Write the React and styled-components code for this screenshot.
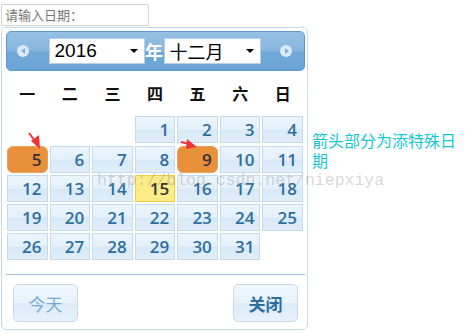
import styled, {createGlobalStyle} from 'styled-components';

const GlobalStyle = createGlobalStyle`
  html, body {
    margin: 0;
    background: #fff;
    font-family: "Liberation Sans", "Noto Sans CJK SC", sans-serif;
  }
`

const Page = styled.div`
  position: relative;
  display: flex;
  align-items: flex-start;
  padding: 4px 0 0 1px;
  width: 466px;
  height: 335px;
  box-sizing: border-box;
  overflow: hidden;
`

const LeftCol = styled.div`
  display: flex;
  flex-direction: column;
  gap: 1px;
`

const DateInput = styled.div`
  width: 148px;
  height: 22px;
  box-sizing: border-box;
  border: 1px solid #d3d3d3;
  border-radius: 2px;
  padding: 1px 3px;
  font-size: 13px;
  line-height: 18px;
  color: #777;
  font-family: "Noto Sans CJK SC", sans-serif;
`

const Picker = styled.div`
  width: 307px;
  box-sizing: border-box;
  border: 1px solid #c5dbec;
  border-radius: 5px;
  padding: 3px 2px 7px 4px;
  background: #fff;
`

const Header = styled.div`
  height: 40px;
  box-sizing: border-box;
  border: 1px solid #5a9bd2;
  border-radius: 5px;
  background: linear-gradient(#96c0e4 0%, #88b6de 48%, #72a9d8 52%, #6aa4d5 100%);
  display: flex;
  align-items: center;
  justify-content: space-between;
  padding: 0 12px 0 10px;
`

const NavButton = styled.div`
  width: 12px;
  height: 12px;
  border-radius: 50%;
  background: #dce9f6;
  display: flex;
  align-items: center;
  justify-content: center;
  &::after {
    content: '';
    width: 0;
    height: 0;
    border-top: 3px solid transparent;
    border-bottom: 3px solid transparent;
    ${p => p.$dir === 'prev'
      ? 'border-right: 4px solid #7fb0dc; margin-right: 1px;'
      : 'border-left: 4px solid #7fb0dc; margin-left: 1px;'}
  }
`

const Title = styled.div`
  display: flex;
  align-items: center;
`

const SelectBox = styled.div`
  width: ${p => p.$w}px;
  height: 26px;
  box-sizing: border-box;
  background: #fff;
  border: 1px solid #b9cfe3;
  display: flex;
  align-items: center;
  justify-content: space-between;
  padding: 0 6px 0 5px;
  font-size: ${p => p.$size}px;
  color: #000;
  font-family: "Liberation Sans", "Noto Sans CJK SC", sans-serif;
  &::after {
    content: '';
    border-left: 4px solid transparent;
    border-right: 4px solid transparent;
    border-top: 4px solid #000;
  }
`

const YearLabel = styled.span`
  width: 19px;
  text-align: center;
  color: #fff;
  font-weight: bold;
  font-size: 18px;
  font-family: "Noto Sans CJK SC", sans-serif;
`

const Grid = styled.div`
  display: grid;
  grid-template-columns: repeat(7, 1fr);
  grid-template-rows: 43px;
  grid-auto-rows: 27px;
  column-gap: 2px;
  row-gap: 2.25px;
  width: 296px;
  padding-left: 1px;
`

const WeekHead = styled.div`
  display: flex;
  align-items: center;
  justify-content: center;
  font-weight: bold;
  font-size: 16px;
  color: #111;
  font-family: "Noto Sans CJK SC", sans-serif;
`

const variants = {
  normal: `
    background: linear-gradient(#ecf5fd 0%, #e4f0fb 48%, #d8e8f7 52%, #e0eefa 100%);
    border: 1px solid #c5dbec;
    color: #2e6e9e;
  `,
  today: `
    background: #fbec88;
    border: 1px solid #f2cf3a;
    color: #363636;
  `,
  special: `
    background: #e8903a;
    border: 1px solid #e8a060;
    border-radius: 6px;
    color: #333;
  `,
  empty: `
    background: transparent;
    border: 1px solid transparent;
  `,
}

const Day = styled.div`
  box-sizing: border-box;
  display: flex;
  align-items: center;
  justify-content: flex-end;
  padding-right: 5px;
  font-family: "Open Sans", "Liberation Sans", sans-serif;
  font-weight: 600;
  font-size: 17px;
  ${p => variants[p.$variant]}
`

const ButtonPane = styled.div`
  margin-top: 14px;
  border-top: 1px solid #a6c9e2;
  padding: 9px 7px 0 7px;
  display: flex;
  justify-content: space-between;
`

const PaneButton = styled.div`
  width: 65px;
  height: 38px;
  box-sizing: border-box;
  border: 1px solid #c5dbec;
  border-radius: 5px;
  background: linear-gradient(#f0f7fd 0%, #e8f2fc 48%, #dcebf9 52%, #e6f1fb 100%);
  display: flex;
  align-items: center;
  justify-content: center;
  font-size: 17px;
  font-family: "Noto Sans CJK SC", sans-serif;
  color: ${p => p.$primary ? '#2e6e9e' : '#7aa9d0'};
  font-weight: ${p => p.$primary ? 'bold' : 'normal'};
`

const Note = styled.div`
  width: 150px;
  margin: 126px 0 0 4px;
  font-size: 16px;
  line-height: 20px;
  color: #14c8d2;
  font-family: "Noto Sans CJK SC", sans-serif;
`

const Watermark = styled.div`
  position: absolute;
  left: 97px;
  top: 171px;
  font-family: "Liberation Mono", monospace;
  font-size: 16.5px;
  color: rgba(140, 140, 140, 0.35);
  white-space: nowrap;
  pointer-events: none;
`

const Marks = styled.svg`
  position: absolute;
  left: 0;
  top: 0;
  pointer-events: none;
`

const weekDays = ['一', '二', '三', '四', '五', '六', '日']
const special = [5, 9]
const today = 15

function buildDays() {
  const cells = [null, null, null]
  for (let d = 1; d <= 31; d++) cells.push(d)
  while (cells.length < 35) cells.push(null)
  return cells
}

export default function App() {
  const cells = buildDays()
  return (
    <>
      <GlobalStyle />
      <Page>
        <LeftCol>
          <DateInput>请输入日期：</DateInput>
          <Picker>
            <Header>
              <NavButton $dir="prev" />
              <Title>
                <SelectBox $w={96} $size={19}>2016</SelectBox>
                <YearLabel>年</YearLabel>
                <SelectBox $w={97} $size={18}>十二月</SelectBox>
              </Title>
              <NavButton $dir="next" />
            </Header>
            <Grid>
              {weekDays.map(w => <WeekHead key={w}>{w}</WeekHead>)}
              {cells.map((d, i) => {
                let variant = 'normal'
                if (d === null) variant = 'empty'
                else if (special.includes(d)) variant = 'special'
                else if (d === today) variant = 'today'
                return <Day key={i} $variant={variant}>{d}</Day>
              })}
            </Grid>
            <ButtonPane>
              <PaneButton>今天</PaneButton>
              <PaneButton $primary>关闭</PaneButton>
            </ButtonPane>
          </Picker>
        </LeftCol>
        <Note>箭头部分为添特殊日期</Note>
        <Watermark>http://blog.csdn.net/niepxiya</Watermark>
        <Marks width="466" height="335">
          <line x1="29" y1="133" x2="35" y2="141" stroke="#f03434" strokeWidth="2" />
          <polygon points="31,141 39,135 40,149" fill="#f03434" />
          <line x1="181" y1="142" x2="189" y2="144" stroke="#f03434" strokeWidth="2" />
          <polygon points="187,139 197,147 186,149" fill="#f03434" />
        </Marks>
      </Page>
    </>
  )
}
